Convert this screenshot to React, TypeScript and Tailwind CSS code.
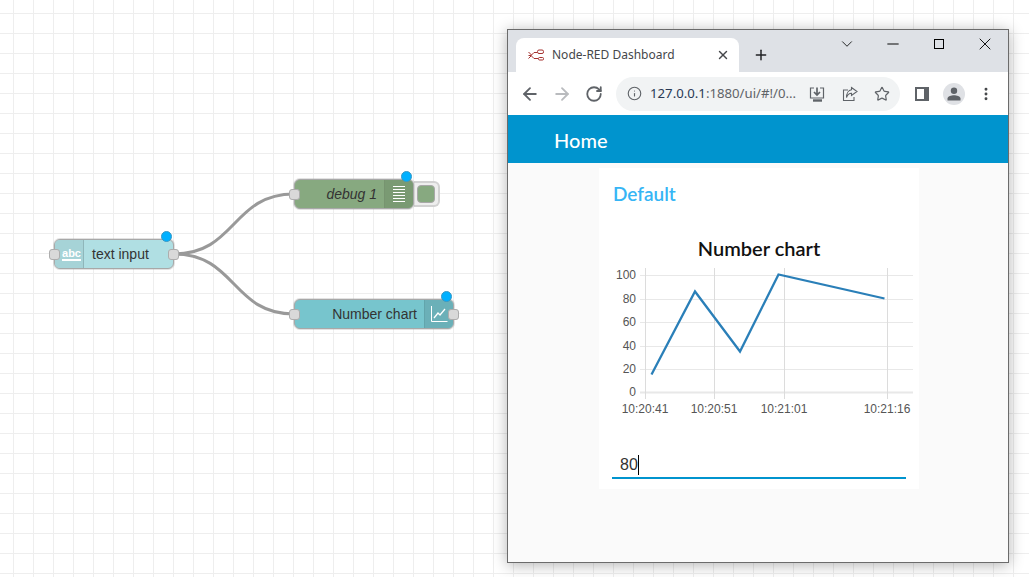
import { ArrowLeft, ArrowRight, ChevronDown, EllipsisVertical, Info, Minus, Plus, RotateCw, Star, X } from "lucide-react";

const Port = () => (
  <div className="h-[11px] w-[11px] rounded-[3px] border border-[#adadad] bg-[#d9d9d9]" />
);

const StatusDot = ({ className }: { className: string }) => (
  <div className={"absolute h-[11px] w-[11px] rounded-full border border-[#3a98c4] bg-[#00b0ff] " + className} />
);

const Wires = () => (
  <svg className="absolute left-0 top-0" width="500" height="400" fill="none" stroke="#999" strokeWidth="3">
    <path d="M174 254C236 254 232 194 294 194" />
    <path d="M174 254C236 254 232 314 294 314" />
  </svg>
);

const TextInputNode = () => (
  <div className="absolute left-[54px] top-[239px] flex h-[30px] w-[120px] items-center rounded-[6px] border border-[#a8a8a8] bg-[#b0dfe3] shadow-[0_0_0_1px_rgba(160,160,160,0.3)]">
    <div className="flex h-full w-[29px] items-center justify-center rounded-l-[5px] border-r border-[#8fb6ba] bg-[#a6d3d7]">
      <span className="ml-[5px] border-b-2 border-white text-[11px] font-bold leading-[11px] text-white">abc</span>
    </div>
    <span className="flex-1 pl-[8px] text-[14px] text-[#333]">text input</span>
    <div className="absolute -left-[6px] top-[9px]"><Port /></div>
    <div className="absolute -right-[6px] top-[9px]"><Port /></div>
    <StatusDot className="-top-[9px] right-[1px]" />
  </div>
);

const DebugNode = () => (
  <div className="absolute left-[294px] top-[179px] flex h-[30px] w-[146px] items-center">
    <div className="relative z-10 flex h-full w-[120px] items-center rounded-[6px] border border-[#a8a8a8] bg-[#87a980] shadow-[0_0_0_1px_rgba(160,160,160,0.3)]">
      <span className="flex-1 pr-[7px] text-right text-[14px] italic text-[#333]">debug 1</span>
      <div className="flex h-full w-[29px] flex-col items-center justify-center gap-[2px] rounded-r-[5px] border-l border-[#779470] bg-[#7a9a73]">
        {[0, 1, 2, 3, 4, 5].map((i) => (
          <div key={i} className="h-[1px] w-[12px] bg-white" />
        ))}
      </div>
      <div className="absolute -left-[6px] top-[9px]"><Port /></div>
      <StatusDot className="-top-[9px] right-[1px]" />
    </div>
    <div className="flex h-[26px] w-[26px] items-center justify-center rounded-r-[6px] border-2 border-l-0 border-[#d2d2d2] bg-[#eee]">
      <div className="h-[18px] w-[18px] rounded-[4px] border border-[#a8a8a8] bg-[#87a980]" />
    </div>
  </div>
);

const ChartNode = () => (
  <div className="absolute left-[294px] top-[299px] flex h-[30px] w-[160px] items-center rounded-[6px] border border-[#a8a8a8] bg-[#77c5cd] shadow-[0_0_0_1px_rgba(160,160,160,0.3)]">
    <span className="flex-1 pr-[7px] text-right text-[14px] text-[#333]">Number chart</span>
    <div className="flex h-full w-[29px] items-center justify-center rounded-r-[5px] border-l border-[#62a5ac] bg-[#6bb0b8]">
      <svg width="18" height="18" viewBox="0 0 18 18" fill="none" stroke="#fff">
        <path d="M1.500 1v15.500h16" strokeWidth="1" />
        <path d="M4 13l4-5 2 2 5-6" strokeWidth="1.300" />
      </svg>
    </div>
    <div className="absolute -left-[6px] top-[9px]"><Port /></div>
    <div className="absolute -right-[6px] top-[9px]"><Port /></div>
    <StatusDot className="-top-[9px] right-[1px]" />
  </div>
);

const NodeRedFavicon = () => (
  <svg width="16" height="12" viewBox="0 0 16 12" fill="none" stroke="#a5312f" strokeWidth="1">
    <path d="M0.500 6.500h2.500l3-3h3M0.500 3l3 3M3 6.500l3 3h4" />
    <rect x="9.500" y="1" width="6" height="3.500" rx="1.500" />
    <rect x="10.500" y="8.500" width="5" height="2.500" rx="1" />
    <path d="M0.500 9.500l3-3" />
  </svg>
);

const ChromeTabs = () => (
  <div className="flex h-[42px] shrink-0 bg-[#dee1e6] pl-2 pt-2">
    <div className="flex h-[34px] w-[223px] items-center rounded-t-[8px] bg-white pl-3 pr-[9px]">
      <NodeRedFavicon />
      <span className="ml-2 flex-1 font-['Noto_Sans'] text-[12px] text-[#45474a]">Node-RED Dashboard</span>
      <X size={14} strokeWidth={2.400} className="text-[#45474a]" />
    </div>
    <div className="ml-[14px] mt-[9px] h-4 w-4">
      <Plus size={16} strokeWidth={2.200} className="text-[#202124]" />
    </div>
    <div className="ml-auto flex h-[28px] -translate-y-2 items-center text-black">
      <div className="flex w-[46px] justify-center"><ChevronDown size={18} strokeWidth={1.100} /></div>
      <div className="flex w-[46px] justify-center"><Minus size={18} strokeWidth={1.300} /></div>
      <div className="flex w-[46px] justify-center"><div className="h-[10px] w-[10px] border border-black" /></div>
      <div className="flex w-[46px] justify-center"><X size={20} strokeWidth={1.100} /></div>
    </div>
  </div>
);

const ChromeToolbar = () => (
  <div className="flex h-[43px] shrink-0 items-center bg-white pl-[12px] text-[#5f6368]">
    <ArrowLeft size={20} strokeWidth={2.200} />
    <ArrowRight size={20} strokeWidth={2.200} className="ml-[12px] text-[#b9bbbe]" />
    <RotateCw size={18} strokeWidth={2.400} className="ml-[13px]" />
    <div className="ml-[13px] flex h-[34px] w-[284px] shrink-0 items-center rounded-full bg-[#f1f3f4] pl-[11px]">
      <Info size={15} strokeWidth={1.800} />
      <span className="ml-[8px] w-[149px] whitespace-nowrap font-['Noto_Sans'] text-[13.200px] text-[#5f6368]">
        <span className="text-[#2a3a55]">127.0.0.1</span>:1880/ui/#!/0...
      </span>
      <svg className="ml-[10px]" width="16" height="16" viewBox="0 0 16 16" fill="none" stroke="#5f6368" strokeWidth="1.200">
        <path d="M5 2H1.500v10h13V2H11" />
        <path d="M8 1.500v7.500M5 6l3 3 3-3" strokeWidth="1.700" />
        <path d="M4 14.500h9" strokeWidth="2.400" />
      </svg>
      <svg className="ml-[17px]" width="16" height="16" viewBox="0 0 16 16" fill="none" stroke="#5f6368" strokeWidth="1.100">
        <path d="M6 4H1.500v10.500H12V11" />
        <path d="M9.500 1.500l5.500 4-5.500 4V7.300C7 7.300 5.500 8.500 4.500 11.500 4.500 7.500 6.500 4.200 9.500 3.800z" />
      </svg>
      <Star size={16} strokeWidth={1.800} className="ml-4" />
    </div>
    <div className="ml-[15px] flex h-[14px] w-[14px] justify-end border-2 border-[#5f6368] bg-white">
      <div className="h-full w-[3px] bg-[#5f6368]" />
    </div>
    <div className="ml-[14px] flex h-[22px] w-[22px] items-center justify-center rounded-full bg-[#dfe1e5]">
      <svg width="14" height="14" viewBox="0 0 14 14" fill="#5f6368">
        <circle cx="7" cy="3.800" r="3.200" />
        <path d="M0.500 13.500V11.500C0.500 9.300 4.500 8.300 7 8.300S13.500 9.300 13.500 11.500V13.500z" />
      </svg>
    </div>
    <EllipsisVertical size={16} strokeWidth={2.400} className="ml-[13px] text-[#45474a]" />
  </div>
);

const yTicks = [
  { label: "100", y: 276 },
  { label: "80", y: 300 },
  { label: "60", y: 323 },
  { label: "40", y: 347 },
  { label: "20", y: 370 },
  { label: "0", y: 393 },
];

const xTicks = [
  { label: "10:20:41", x: 645 },
  { label: "10:20:51", x: 714 },
  { label: "10:21:01", x: 784 },
  { label: "10:21:16", x: 887 },
];

// coordinates are page px, shifted by the svg's viewBox
const LineChart = () => (
  <svg className="block font-['Liberation_Sans']" width="320" height="161" viewBox="599 261 320 161">
    {yTicks.map((t) => (
      <g key={t.label}>
        <line x1="640" x2="913" y1={t.y + 0.500} y2={t.y + 0.500} stroke="#e8e8e8" strokeWidth={t.y === 393 ? 2 : 1} />
        <text x="636" y={t.y + 4} textAnchor="end" fontSize="12" fill="#555">{t.label}</text>
      </g>
    ))}
    {xTicks.map((t) => (
      <g key={t.label}>
        <line x1={t.x + 0.500} x2={t.x + 0.500} y1="269" y2="400" stroke="#dcdcdc" />
        <text x={t.x} y="414" textAnchor="middle" fontSize="12" fill="#555">{t.label}</text>
      </g>
    ))}
    <polyline points="651.500,375.500 695,292.500 740,352.500 778.500,275.500 884.500,299.500" fill="none" stroke="#2a7fb8" strokeWidth="2.300" />
  </svg>
);

const Dashboard = () => (
  <div className="flex min-h-0 flex-1 flex-col bg-[#fafafa]">
    <div className="flex h-12 shrink-0 items-center bg-[#0094ce] pl-[46px] pt-[2px] font-['Lato'] text-[20px] font-medium text-white">
      Home
    </div>
    <div className="ml-[91px] mt-[5px] flex h-[321px] w-[320px] flex-col bg-white">
      <div className="pl-[14px] pt-[14px] font-['Lato'] text-[19px] font-semibold leading-[24px] text-[#36b5f5]">Default</div>
      <div className="mt-[30px] text-center font-['Lato'] text-[20px] font-semibold leading-[24px] text-[#111]">Number chart</div>
      <div className="h-[161px]"><LineChart /></div>
      <div className="mx-[13px] mt-[31px] flex h-[27px] items-center border-b-2 border-[#0094ce] pl-2 font-['Liberation_Sans'] text-[16px] text-[#333]">
        80<span className="h-[20px] w-[1px] bg-black" />
      </div>
    </div>
  </div>
);

export default function App() {
  return (
    <div className="relative h-[577px] w-[1029px] overflow-hidden bg-white bg-[linear-gradient(#eeeeee_1px,transparent_1px),linear-gradient(90deg,#eeeeee_1px,transparent_1px)] bg-[size:20px_20px] bg-[position:13px_13px] font-['Liberation_Sans']">
      <Wires />
      <TextInputNode />
      <DebugNode />
      <ChartNode />
      <div className="absolute left-[507px] top-[29px] flex h-[534px] w-[502px] flex-col border border-[#6b6b6b] shadow-[0_2px_14px_rgba(0,0,0,0.3)]">
        <ChromeTabs />
        <ChromeToolbar />
        <Dashboard />
      </div>
    </div>
  );
}
